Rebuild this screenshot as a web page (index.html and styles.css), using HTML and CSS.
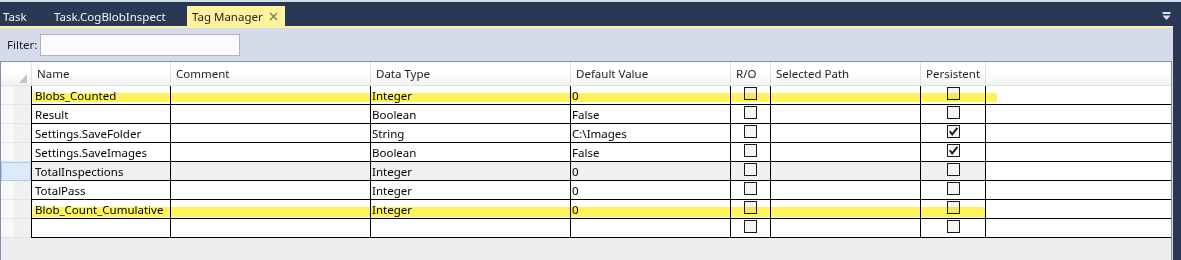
FILE: index.html
```html
<!DOCTYPE html>
<html lang="en">
<head>
    <meta charset="UTF-8">
    <title>Tag Manager</title>
    <link rel="stylesheet" href="styles.css">
</head>
<body>
    <div class="app">
        <div class="main">
            <div class="tabstrip">
                <div class="tab tab-first">Task</div>
                <div class="tab tab-second">Task.CogBlobInspect</div>
                <div class="tab active">Tag Manager
                    <svg class="close" width="9" height="9" viewBox="0 0 9 9"><path d="M1 1 L8 8 M8 1 L1 8" stroke="#7d7556" stroke-width="1.3" fill="none"/></svg>
                </div>
                <div class="tab-menu">
                    <svg width="9" height="9" viewBox="0 0 9 9"><rect x="0.5" y="0" width="8" height="2" fill="#d9dfeb"/><path d="M0.5 3.5 H8.5 L4.5 8 Z" fill="#d9dfeb"/></svg>
                </div>
            </div>
            <div class="accent"></div>
            <div class="panel">
                <div class="toolbar">
                    <label class="filter-label" for="filter">Filter:</label>
                    <input type="text" id="filter" class="filter-box">
                </div>
                <div class="grid">
                    <div class="grid-row head">
                        <div class="cell corner"><svg width="8" height="9" viewBox="0 0 8 9"><path d="M8 0 V9 H0 Z" fill="#c6c6c6"/></svg></div>
                        <div class="cell">Name</div>
                        <div class="cell">Comment</div>
                        <div class="cell">Data Type</div>
                        <div class="cell">Default Value</div>
                        <div class="cell">R/O</div>
                        <div class="cell">Selected Path</div>
                        <div class="cell">Persistent</div>
                        <div class="cell filler"></div>
                    </div>

                    <div class="grid-row">
                        <div class="cell rowhead"></div>
                        <div class="cell name">Blobs_Counted</div>
                        <div class="cell"></div>
                        <div class="cell">Integer</div>
                        <div class="cell">0</div>
                        <div class="cell check-cell"><span class="box"></span></div>
                        <div class="cell"></div>
                        <div class="cell check-cell"><span class="box"></span></div>
                        <div class="cell filler"></div>
                    </div>
                    <div class="grid-row">
                        <div class="cell rowhead"></div>
                        <div class="cell name">Result</div>
                        <div class="cell"></div>
                        <div class="cell">Boolean</div>
                        <div class="cell">False</div>
                        <div class="cell check-cell"><span class="box"></span></div>
                        <div class="cell"></div>
                        <div class="cell check-cell"><span class="box"></span></div>
                        <div class="cell filler"></div>
                    </div>
                    <div class="grid-row">
                        <div class="cell rowhead"></div>
                        <div class="cell name">Settings.SaveFolder</div>
                        <div class="cell"></div>
                        <div class="cell">String</div>
                        <div class="cell">C:\Images</div>
                        <div class="cell check-cell"><span class="box"></span></div>
                        <div class="cell"></div>
                        <div class="cell check-cell"><span class="box checked"><svg width="11" height="11" viewBox="0 0 11 11"><path d="M1.8 5.2 L4.2 8.4 L9.4 1.8" stroke="#1a1a1a" stroke-width="1.9" fill="none"/></svg></span></div>
                        <div class="cell filler"></div>
                    </div>
                    <div class="grid-row">
                        <div class="cell rowhead"></div>
                        <div class="cell name">Settings.SaveImages</div>
                        <div class="cell"></div>
                        <div class="cell">Boolean</div>
                        <div class="cell">False</div>
                        <div class="cell check-cell"><span class="box"></span></div>
                        <div class="cell"></div>
                        <div class="cell check-cell"><span class="box checked"><svg width="11" height="11" viewBox="0 0 11 11"><path d="M1.8 5.2 L4.2 8.4 L9.4 1.8" stroke="#1a1a1a" stroke-width="1.9" fill="none"/></svg></span></div>
                        <div class="cell filler"></div>
                    </div>
                    <div class="grid-row selected">
                        <div class="cell rowhead"></div>
                        <div class="cell name">TotalInspections</div>
                        <div class="cell"></div>
                        <div class="cell">Integer</div>
                        <div class="cell">0</div>
                        <div class="cell check-cell"><span class="box"></span></div>
                        <div class="cell"></div>
                        <div class="cell check-cell"><span class="box"></span></div>
                        <div class="cell filler"></div>
                    </div>
                    <div class="grid-row">
                        <div class="cell rowhead"></div>
                        <div class="cell name">TotalPass</div>
                        <div class="cell"></div>
                        <div class="cell">Integer</div>
                        <div class="cell">0</div>
                        <div class="cell check-cell"><span class="box"></span></div>
                        <div class="cell"></div>
                        <div class="cell check-cell"><span class="box"></span></div>
                        <div class="cell filler"></div>
                    </div>
                    <div class="grid-row">
                        <div class="cell rowhead"></div>
                        <div class="cell name">Blob_Count_Cumulative</div>
                        <div class="cell"></div>
                        <div class="cell">Integer</div>
                        <div class="cell">0</div>
                        <div class="cell check-cell"><span class="box"></span></div>
                        <div class="cell"></div>
                        <div class="cell check-cell"><span class="box"></span></div>
                        <div class="cell filler"></div>
                    </div>
                    <div class="grid-row">
                        <div class="cell rowhead"></div>
                        <div class="cell name"></div>
                        <div class="cell"></div>
                        <div class="cell"></div>
                        <div class="cell"></div>
                        <div class="cell check-cell"><span class="box"></span></div>
                        <div class="cell"></div>
                        <div class="cell check-cell"><span class="box"></span></div>
                        <div class="cell filler"></div>
                    </div>

                    <!-- marker strokes drawn over the rows -->
                    <div class="highlight hl-first"></div>
                    <div class="highlight hl-last"></div>
                </div>
            </div>
        </div>
    </div>
</body>
</html>
```

FILE: styles.css
```css
* {
    margin: 0;
    padding: 0;
    box-sizing: border-box;
}

body {
    height: 260px;
    overflow: hidden;
    background: #293955;
    border-top: 2px solid #d6dbe9;
    font-family: "Noto Sans", "Open Sans", sans-serif;
    font-size: 11.5px;
    color: #000;
}

.app {
    display: flex;
    height: 258px;
}

.main {
    width: 1173px;
    display: flex;
    flex-direction: column;
}

/* tabs */
.tabstrip {
    height: 24px;
    display: flex;
    align-items: flex-end;
}

.tab {
    height: 20px;
    display: flex;
    align-items: center;
    color: #f3f5f9;
    padding-left: 5px;
    white-space: nowrap;
}

.tab-first {
    width: 49px;
    padding-left: 3px;
}

.tab-second {
    width: 138px;
}

.tab.active {
    width: 98px;
    background: #fff29d;
    color: #1e1e1e;
}

.close {
    margin-left: auto;
    margin-right: 7px;
}

.tab-menu {
    margin-left: auto;
    margin-right: 2px;
    align-self: flex-start;
    margin-top: 10px;
    line-height: 0;
}

.accent {
    height: 2px;
    background: #fff29d;
}

/* filter bar */
.panel {
    flex: 1;
    min-height: 0;
    display: flex;
    flex-direction: column;
    background: #d6dbe9;
}

.toolbar {
    height: 33px;
    display: flex;
    align-items: center;
    padding-left: 7px;
}

.filter-label {
    width: 33px;
    color: #1e1e1e;
}

.filter-box {
    width: 200px;
    height: 22px;
    border: 1px solid #acb2c0;
    background: #fbfbfb;
}

/* data grid */
.grid {
    flex: 1;
    position: relative;
    background: #eeeeee;
    border: 1px solid #7d91b5;
    border-bottom: none;
    margin-right: 1px;
}

.grid-row {
    display: grid;
    grid-template-columns: 30px 139px 200px 200px 160px 40px 150px 65px 1fr;
    height: 19px;
    background: #fff;
}

.cell {
    display: flex;
    align-items: center;
    padding-left: 1px;
    border-left: 1px solid #000;
    border-bottom: 1px solid #000;
    white-space: nowrap;
    overflow: hidden;
}

.cell.name {
    padding-left: 3px;
}

.rowhead {
    border-left: none;
    border-bottom: 1px solid #e4e4e4;
    background: linear-gradient(to right, #f8f8f8 38%, #f0f0f0 44%);
}

.head {
    height: 24px;
}

.head .cell {
    padding-left: 5px;
    color: #1e1e1e;
    border-color: #e2e2e2;
    background: linear-gradient(#ffffff, #ffffff 45%, #f2f2f2);
}

.head .corner {
    border-left: none;
    justify-content: flex-end;
    align-items: flex-end;
    padding: 0 4px 2px 0;
}

.check-cell {
    justify-content: center;
    align-items: flex-start;
    padding-left: 0;
}

.box {
    width: 13px;
    height: 13px;
    margin-top: 1px;
    border: 1px solid #1c1c1c;
    background: #f4f4f4;
    line-height: 0;
}

.selected .cell {
    background: #f0f0f0;
}

.selected .cell.filler {
    background: #fff;
}

.selected .rowhead {
    background: #dcebfb;
    border: 1px solid #a9cdee;
}

.highlight {
    position: absolute;
    background: #fff35a;
    mix-blend-mode: multiply;
}

.hl-first {
    left: 32px;
    top: 31px;
    width: 964px;
    height: 9px;
}

.hl-last {
    left: 32px;
    top: 145px;
    width: 953px;
    height: 10px;
}
```
